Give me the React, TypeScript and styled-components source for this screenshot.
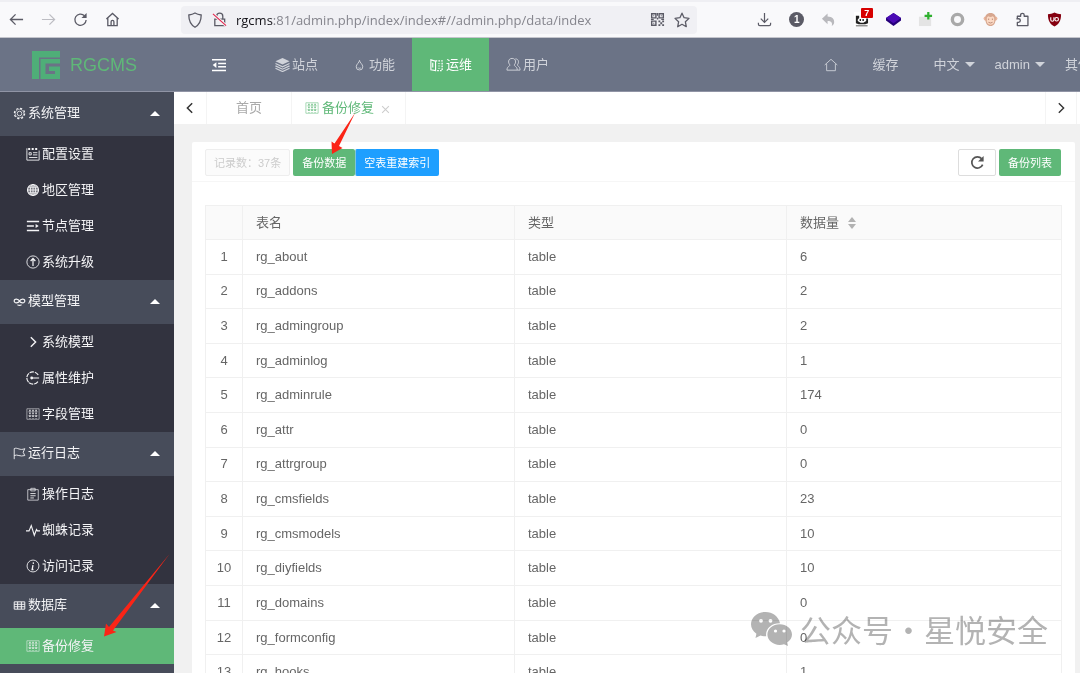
import React from 'react';
import styled, { createGlobalStyle, css } from 'styled-components';

const sans = `"Liberation Sans", "Noto Sans CJK SC", sans-serif`;
const green = '#5fb878';
const blue = '#1e9fff';

const GlobalStyle = createGlobalStyle`
  * { box-sizing: border-box; }
  body { margin: 0; background: #f1f1f1; color: #666; font: 13px/20px ${sans}; }
  button, input { font: inherit; color: inherit; border: 0; padding: 0; margin: 0; background: none; }
  button { cursor: pointer; }
  a { color: inherit; text-decoration: none; }
  svg { display: block; flex: none; }
`;

/* ---------- icons ---------- */

type IconProps = { size?: number; weight?: number; children: React.ReactNode };

const Icon = ({ size = 14, weight = 1, children }: IconProps) => (
  <svg width={size} height={size} viewBox="0 0 16 16" fill="none" stroke="currentColor" strokeWidth={weight} aria-hidden="true">
    {children}
  </svg>
);

const fill = { fill: 'currentColor', stroke: 'none' };

const icons = {
  gear: (
    <>
      <circle cx="8" cy="8" r="2.800" />
      <circle cx="8" cy="8" r="6.300" strokeWidth="1.500" strokeDasharray="2.600 2.350" />
      <circle cx="8" cy="8" r="5.200" strokeOpacity=".7" />
    </>
  ),
  config: (
    <>
      <path d="M1 4v11h14V4M1 4V1.500" />
      <path d="M2.500 3.500V1h2.300v2.500zM6.500 3.500V1h2.300v2.500zM10.500 3.500V1h2.300v2.500z" {...fill} />
      <path d="M3.500 6.500h2.500v2.500H3.500zM8 6.500h5M8 9h5M3.500 12h9.500" />
    </>
  ),
  globe: (
    <>
      <circle cx="8" cy="8" r="6.300" strokeWidth="1.300" fill="currentColor" fillOpacity=".35" />
      <ellipse cx="8" cy="8" rx="3" ry="6.300" />
      <path d="M8 1.500v13M2 8h12M3 4.800h10M3 11.200h10" />
    </>
  ),
  nodes: (
    <>
      <path d="M1 2.800h14M1 8h8M1 13.200h14" strokeWidth="1.700" />
      <path d="M11 5.800 14.500 8 11 10.200z" {...fill} />
    </>
  ),
  upgrade: (
    <>
      <circle cx="8" cy="8" r="7" />
      <path d="M8 12.500V4.500M5.300 6.800 8 4l2.700 2.800" strokeWidth="1.400" />
    </>
  ),
  model: (
    <>
      <path d="M8 7.500C6.500 4.500 1.500 4 1.500 7.300s5 2.700 6.500.2c1.500-3 6.500-3.500 6.500-.2s-5 2.700-6.500.2z" strokeWidth="1.500" />
      <path d="M5.500 12q2.500 1.500 5 0" strokeWidth="1.400" />
    </>
  ),
  chevron: <path d="m5.500 2.500 5.500 5.500-5.500 5.500" strokeWidth="1.600" />,
  attr: (
    <>
      <path d="M14 4.500A7 7 0 1 0 14 11.500" strokeWidth="1.300" strokeDasharray="5 1" />
      <path d="M6 8h9" strokeWidth="1.200" />
      <circle cx="6.500" cy="8" r="1.600" {...fill} />
    </>
  ),
  grid: (
    <>
      <path d="M1 2h14v12H1z" strokeOpacity=".6" />
      <path d="M4.500 3v10M8 3v10M11.500 3v10" strokeWidth="1.500" strokeDasharray="2 1.200" />
      <path d="M2 5.500h12M2 10h12" strokeOpacity=".4" />
    </>
  ),
  flag: <path d="M1.500 15V2c4-2 7 3 13 0l-2 4.500 2 4c-6 2-9-2-13 0" strokeWidth="1.100" />,
  clipboard: (
    <>
      <path d="M2 3h12v12H2zM5.500 1.500h5v3h-5z" strokeOpacity=".8" />
      <path d="M5 7.500h6M5 10h6M5 12.500h4" />
    </>
  ),
  pulse: <path d="M0 9h3.500L6 3l3.500 11L12 7.500l1 1.500h3" strokeWidth="1.300" />,
  info: (
    <>
      <circle cx="8" cy="8" r="6.800" />
      <path d="M8.500 3.800 8.300 5.500M8 7l-1 5h1.500" strokeWidth="1.500" />
    </>
  ),
  database: <path d="M1.500 3.500h13v9h-13zM1.500 6.500h13M1.500 9.500h13M5.700 3.500v9M10.300 3.500v9" strokeWidth="1.200" />,
  layers: (
    <>
      <path d="M8 1 15.500 4.500 8 8 .500 4.500z" {...fill} />
      <path d="M.500 7 8 10.500 15.500 7M.500 9.500 8 13l7.500-3.500M.500 12 8 15.500l7.500-3.500" strokeWidth="1.300" />
    </>
  ),
  flame: <path d="M8 3.500c0 2.500-3.500 4-3.500 7A3.300 3.300 0 0 0 8 13.800a3.300 3.300 0 0 0 3.500-3.300C11.500 7.500 8 6 8 3.500zM6.500 11.300c.3 1 2.700 1 3 0" />,
  book: (
    <>
      <path d="M2 2 7 3.500v10L2 12.500z" strokeWidth="1.200" />
      <path d="M4 5v5" strokeWidth="1.200" />
      <path d="M7 3h7v10.500H7" strokeDasharray="1.800 1.200" strokeWidth="1.400" />
      <path d="M9.500 6h2.500M9.500 8.500h2.500M9.500 11h2.500" strokeOpacity=".7" />
    </>
  ),
  users: (
    <>
      <path d="M6.500 1.500c4.500 0 4.500 5 2.200 7 .3 1.500 3.300 1.500 3.300 5.500H1c0-4 3-4 3.300-5.500C2 6.500 2 1.500 6.500 1.500z" />
      <path d="M10 2c4 0 4 4.500 2 6.500.5 1.500 3 1.500 3 5.500h-3" />
    </>
  ),
  house: <path d="M.8 8 8 1.500 15.200 8M3 6.500V14.500h10V6.500" />,
  shrink: (
    <>
      <path d="M0 2h16M7 6.300h9M7 10h9M0 14.300h16" strokeWidth="1.900" />
      <path d="M5 4.800v6.500L.8 8z" {...fill} />
    </>
  ),
  left: <path d="M10.500 2.500 5 8l5.500 5.500" strokeWidth="1.700" />,
  close: <path d="m2 2 12 12M14 2 2 14" strokeWidth="1.800" />,
  refresh: (
    <>
      <path d="M13.500 10.200A6 6 0 1 1 12.500 4" strokeWidth="1.800" />
      <path d="M14.500 1v6H8.500z" {...fill} />
    </>
  ),
  back: <path d="M15 8H1.500M7 2.500 1.500 8 7 13.500" strokeWidth="1.400" />,
  forward: <path d="M1 8h13.500M9 2.500 14.500 8 9 13.500" strokeWidth="1.300" />,
  reload: (
    <>
      <path d="M14 8.500A6 6 0 1 1 12.300 4" strokeWidth="1.400" />
      <path d="M14.500 1v5.500H9z" {...fill} />
    </>
  ),
  home: <path d="M1.500 7.500 8 1.500l6.500 6M3 6.500v8h10v-8M6.500 14.500v-4q0-1.500 1.500-1.500t1.500 1.500v4" strokeWidth="1.400" />,
  shield: <path d="M8 1c2 1.200 4 1.700 6.200 2C14.200 9 12 13 8 15.200 4 13 1.800 9 1.800 3 4 2.700 6 2.200 8 1z" strokeWidth="1.300" />,
  lock: (
    <>
      <path d="M3 7.500h10.500v7H3zM5 7.500V4.500a3.200 3.200 0 0 1 6.500 0v3" strokeWidth="1.400" />
      <path d="m1 2 14 12.500" stroke="#f5f5f7" strokeWidth="3" />
      <path d="m1 2 14 12.500" stroke="#e22850" strokeWidth="1.300" />
    </>
  ),
  qr: (
    <>
      <path d="M1.800 1.800h4.500v4.500H1.800zM9.700 1.800h4.500v4.500H9.700zM1.800 9.700h4.500v4.500H1.800z" strokeWidth="1.500" />
      <path d="M3.500 3.500h1v1h-1zM11.500 3.500h1v1h-1zM3.500 11.500h1v1h-1zM9 9h2v2H9zM11 11h2v2h-2zM13 9h2v2h-2zM9 13h2v2H9zM13 13h2v2h-2zM7.300 1h1.200v3H7.300zM7.300 6h1.500v2H7.300zM1 7.300h3v1.200H1zM12 7.300h3v1.200h-3z" {...fill} />
    </>
  ),
  star: <path d="m8 1.200 2.100 4.500 4.900.7-3.600 3.400.9 4.900L8 12.300l-4.300 2.400.9-4.900L1 6.400l4.900-.7z" strokeWidth="1.300" strokeLinejoin="round" />,
  download: <path d="M8 1v9.500M4 7l4 4 4-4M1.500 11.500v1.500q0 1.500 1.500 1.500h10q1.500 0 1.500-1.500v-1.500" strokeWidth="1.300" />,
  undo: <path d="M7 1.500v3.300c5 0 7.500 3 7 6.700-.2 1.500-1 2.500-2.500 3.500 1-3.500-.5-5.300-4.500-5.300V13L1 7.200z" {...fill} />,
  cube: (
    <>
      <path d="M8 1 16 6.500V9l-8 6L0 9V6.500z" fill="#26007a" stroke="none" />
      <path d="M8 1 16 6.500 8 12 0 6.500z" fill="#4b0bb5" stroke="none" />
    </>
  ),
  plus: (
    <>
      <path d="M1 5h13v10H1z" fill="#e4e4e4" stroke="none" />
      <path d="M11 0v8M7 4h8" stroke="#2fb02f" strokeWidth="2.400" />
    </>
  ),
  ring: <circle cx="8" cy="8" r="5.500" stroke="#a9a9a9" strokeWidth="3.600" />,
  monkey: (
    <>
      <circle cx="2.800" cy="7" r="2.200" fill="#ecb79d" stroke="none" />
      <circle cx="13.200" cy="7" r="2.200" fill="#ecb79d" stroke="none" />
      <path d="M8 1c4 0 6 2.500 5.500 6.500C13.300 12.500 11.500 15 8 15s-5.300-2.500-5.500-7.500C2 3.500 4 1 8 1z" fill="#d7a78f" stroke="none" />
      <path d="M5.500 4.500Q8 6 10.500 4.500q2 1 1.500 3.500.5 5-4 5.500-4.500-.5-4-5.500-.5-2.500 1.500-3.500z" fill="#fbd9c4" stroke="none" />
      <path d="M6 7v1.500M10 7v1.500M5.800 11q2.200 1.500 4.400 0" stroke="#b98a76" />
    </>
  ),
  puzzle: <path d="M2.500 6.500v-2H6V3.300a1.900 1.900 0 0 1 3.800 0v1.200h4v10H2.500V11h1.300a1.900 1.900 0 0 0 0-3.800H1.500" strokeWidth="1.400" strokeLinejoin="round" />,
  guard: (
    <>
      <path d="M8 .5c2.500 1.200 4.500 1.700 7 1.800 0 6.500-2 10.500-7 13.200C3 12.800 1 8.800 1 2.300 3.500 2.200 5.500 1.700 8 .5z" fill="#850010" stroke="none" />
      <path d="M4 5.500v2.700q0 1.600 1.700 1.600t1.700-1.600V5.500" stroke="#fff" strokeWidth="1.200" />
      <circle cx="10.300" cy="7.700" r="1.900" stroke="#fff" strokeWidth="1.200" />
    </>
  ),
  panda: (
    <>
      <path d="M0 0h16v16H0z" fill="#fff" stroke="none" />
      <path d="M2 4h3.500v2.500L4 8v1.500l3 2h3l3-2V7h2v5l-3 1H5l-3-1zM6 7.500h1.500v2H6zM9 7.500h1.500v2H9z" {...fill} />
      <path d="M2 14.700h12.500" strokeOpacity=".6" strokeWidth="1.300" />
    </>
  ),
};

type IconName = keyof typeof icons;
const Glyph = ({ name, size }: { name: IconName; size?: number }) => <Icon size={size}>{icons[name]}</Icon>;

/* ---------- browser toolbar ---------- */

const BrowserBar = styled.div`
  flex: none;
  display: flex;
  align-items: center;
  height: 38px;
  padding: 0 18px 0 9px;
  background: #f9f9fb;
  border-top: 2px solid #efeff3;
  border-bottom: 1px solid #c4c5cc;
  color: #5b5b66;
`;

const BrowserNav = styled.div`
  display: flex;
  gap: 17px;
  width: 172px;
`;

const IconButton = styled.button<{ $tone?: string }>`
  position: relative;
  display: flex;
  color: ${(p) => p.$tone ?? 'inherit'};
`;

const AddressBar = styled.div`
  flex: 1;
  display: flex;
  align-items: center;
  gap: 9px;
  height: 28px;
  padding: 0 7px 0 6px;
  background: #f0f0f4;
  border-radius: 4px;
`;

const Address = styled.label`
  flex: 1;
  display: flex;
  font-family: "Open Sans", "Noto Sans", sans-serif;
  color: #85858d;
  b { font-weight: 400; color: #15141a; }
  input { flex: 1; min-width: 0; outline: 0; }
`;

const Extensions = styled.div`
  display: flex;
  justify-content: space-between;
  width: 305px;
  margin-left: 60px;
`;

const Badge = styled.span`
  position: absolute;
  top: -4px;
  right: -4px;
  width: 12px;
  background: #d70000;
  border-radius: 1px;
  color: #fff;
  font: bold 9px/10px ${sans};
  text-align: center;
`;

const Counter = styled.span`
  width: 15px;
  border-radius: 50%;
  background: #5b5b66;
  color: #fff;
  font: bold 10px/15px ${sans};
  text-align: center;
`;

/* ---------- application header ---------- */

const Page = styled.div`
  display: flex;
  flex-direction: column;
  height: 100vh;
  overflow: hidden;
`;

const Header = styled.header`
  flex: none;
  display: flex;
  align-items: stretch;
  height: 54px;
  overflow: hidden;
  background: #6b7386;
  border-bottom: 1px solid #9094a5;
  color: #d0d3da;
`;

const Logo = styled.a`
  display: flex;
  align-items: center;
  gap: 10px;
  width: 174px;
  padding-left: 32px;
  color: ${green};
  font-size: 18px;
`;

const MenuToggle = styled.button`
  width: 84px;
  padding-left: 38px;
  color: #fff;
`;

const TopNav = styled.nav`
  display: flex;
`;

const TopLink = styled.a<{ $active?: boolean }>`
  display: flex;
  align-items: center;
  gap: 2px;
  padding: 0 17px;
  ${(p) => p.$active && css`
    background: ${green};
    color: #fff;
    margin-bottom: -1px;
  `}
`;

const UserNav = styled.nav`
  display: flex;
  align-items: center;
  gap: 20px;
  margin: 0 -11px 0 auto;
  white-space: nowrap;
`;

const WideLink = styled.a`
  margin-right: 15px;
`;

const DropButton = styled.button`
  display: flex;
  align-items: center;
  gap: 5px;
`;

const Caret = styled.span<{ $up?: boolean }>`
  border: 5px solid transparent;
  ${(p) => p.$up
    ? css`border-top-width: 0; border-bottom-color: #fff;`
    : css`border-bottom-width: 0; border-top-color: currentColor;`}
`;

/* ---------- sidebar ---------- */

const Body = styled.div`
  flex: 1;
  display: flex;
  min-height: 0;
`;

const Sidebar = styled.aside`
  flex: none;
  width: 174px;
  overflow: hidden;
  background: #474c5a;
  color: #f4f4f6;
`;

const GroupHead = styled.button`
  display: flex;
  align-items: center;
  gap: 2px;
  width: 100%;
  height: 44px;
  padding: 0 14px 2px 13px;
  ${Caret} { margin-left: auto; }
`;

const GroupList = styled.div`
  background: #32333f;
`;

const SideLink = styled.a<{ $active?: boolean }>`
  display: flex;
  align-items: center;
  gap: 2px;
  height: 36px;
  padding-left: 26px;
  background: ${(p) => (p.$active ? green : 'transparent')};
`;

/* ---------- content ---------- */

const Main = styled.main`
  flex: 1;
  min-width: 0;
`;

const TabBar = styled.div`
  display: flex;
  height: 32px;
  padding-right: 3px;
  background: #fff;
`;

const TabArrow = styled.button<{ $end?: boolean }>`
  display: grid;
  place-items: center;
  width: ${(p) => (p.$end ? 32 : 33)}px;
  margin-left: ${(p) => (p.$end ? 'auto' : 0)};
  border: solid #f4f4f4;
  border-width: ${(p) => (p.$end ? '0 1px' : '0 1px 0 0')};
  color: #333;
`;

const Tab = styled.div<{ $active?: boolean }>`
  display: flex;
  align-items: center;
  gap: 3px;
  padding: 0 ${(p) => (p.$active ? 15 : 29)}px 0 ${(p) => (p.$active ? 13 : 29)}px;
  border-right: 1px solid #f4f4f4;
  color: ${(p) => (p.$active ? green : '#aaa')};
  ${IconButton} { margin: 3px 0 0 4px; }
`;

const Card = styled.section`
  margin: 18px 5px 0 18px;
  background: #fff;
  border-radius: 2px;
`;

const CardHead = styled.div`
  display: flex;
  align-items: center;
  height: 40px;
  padding: 2px 14px 0 13px;
  border-bottom: 1px solid #f6f6f6;
`;

const Button = styled.button<{ $kind: 'primary' | 'info' | 'plain' | 'muted' }>`
  display: flex;
  align-items: center;
  justify-content: center;
  height: 27px;
  padding: 0 8px;
  border: 1px solid transparent;
  border-radius: 2px;
  font-size: 11px;
  white-space: nowrap;
  ${(p) => ({
    primary: css`background: ${green}; color: #fff;`,
    info: css`background: ${blue}; color: #fff;`,
    plain: css`width: 38px; background: #fff; border-color: #ddd; color: #555;`,
    muted: css`background: #fbfbfb; border-color: #eee; color: #ccc;`,
  })[p.$kind]}
`;

const ButtonGroup = styled.div<{ $end?: boolean }>`
  display: flex;
  gap: ${(p) => (p.$end ? 3 : 0)}px;
  margin-left: ${(p) => (p.$end ? 'auto' : '3px')};
  button + button { border-left-color: ${(p) => (p.$end ? 'transparent' : '#7fc5d8')}; }
`;

const TableWrap = styled.div`
  padding: 23px 13px 13px;
`;

const Table = styled.table`
  width: 100%;
  height: 485px;
  table-layout: fixed;
  border-collapse: collapse;
  th, td {
    padding: 0 13px;
    border: 1px solid #f0f0f0;
    font-weight: 400;
    text-align: left;
  }
  th { height: 34px; background: #fafafa; }
  th:first-child, td:first-child { width: 37px; padding: 0; text-align: center; }
  th:nth-child(2), th:nth-child(3) { width: 272px; }
`;

const SortButton = styled.button`
  display: flex;
  align-items: center;
  gap: 9px;
`;

const SortMarks = styled.span`
  display: grid;
  gap: 2px;
  ${Caret} { border-width: 0 4px 5px; border-bottom-color: #b2b2b2; }
  ${Caret} + ${Caret} { border-width: 5px 4px 0; border-top-color: #b2b2b2; }
`;

/* ---------- overlays ---------- */

const Arrows = styled.svg`
  position: absolute;
  top: 0;
  left: 0;
  pointer-events: none;
`;

const Watermark = styled.div`
  position: absolute;
  right: 32px;
  bottom: 22px;
  display: flex;
  align-items: center;
  gap: 8px;
  color: #b3b3b3;
  font: 31px/44px "Noto Sans CJK SC", sans-serif;
  mix-blend-mode: multiply;
  pointer-events: none;
`;

/* ---------- data ---------- */

const groups: { icon: IconName; title: string; items: [IconName, string][] }[] = [
  { icon: 'gear', title: '系统管理', items: [['config', '配置设置'], ['globe', '地区管理'], ['nodes', '节点管理'], ['upgrade', '系统升级']] },
  { icon: 'model', title: '模型管理', items: [['chevron', '系统模型'], ['attr', '属性维护'], ['grid', '字段管理']] },
  { icon: 'flag', title: '运行日志', items: [['clipboard', '操作日志'], ['pulse', '蜘蛛记录'], ['info', '访问记录']] },
  { icon: 'database', title: '数据库', items: [['grid', '备份修复']] },
];

const topLinks: [IconName, string][] = [['layers', '站点'], ['flame', '功能'], ['book', '运维'], ['users', '用户']];

const rows: [string, number][] = [
  ['rg_about', 6], ['rg_addons', 2], ['rg_admingroup', 2], ['rg_adminlog', 1], ['rg_adminrule', 174],
  ['rg_attr', 0], ['rg_attrgroup', 0], ['rg_cmsfields', 23], ['rg_cmsmodels', 10], ['rg_diyfields', 10],
  ['rg_domains', 0], ['rg_formconfig', 0], ['rg_hooks', 1],
];

export default function App() {
  return (
    <Page>
      <GlobalStyle />
      <BrowserBar>
        <BrowserNav>
          <IconButton aria-label="后退"><Glyph name="back" size={15} /></IconButton>
          <IconButton aria-label="前进" $tone="#bdbdc3"><Glyph name="forward" size={15} /></IconButton>
          <IconButton aria-label="刷新"><Glyph name="reload" size={15} /></IconButton>
          <IconButton aria-label="主页"><Glyph name="home" size={15} /></IconButton>
        </BrowserNav>
        <AddressBar>
          <Glyph name="shield" size={16} />
          <Glyph name="lock" size={15} />
          <Address>
            <b>rgcms</b>
            <input aria-label="地址" defaultValue=":81/admin.php/index/index#//admin.php/data/index" />
          </Address>
          <IconButton aria-label="二维码"><Glyph name="qr" size={15} /></IconButton>
          <IconButton aria-label="收藏"><Glyph name="star" size={16} /></IconButton>
        </AddressBar>
        <Extensions>
          <IconButton aria-label="下载"><Glyph name="download" size={15} /></IconButton>
          <IconButton aria-label="标签"><Counter>1</Counter></IconButton>
          <IconButton aria-label="撤销" $tone="#b9b9bd"><Glyph name="undo" size={15} /></IconButton>
          <IconButton aria-label="通知" $tone="#222"><Glyph name="panda" size={15} /><Badge>7</Badge></IconButton>
          <IconButton aria-label="盒子"><Glyph name="cube" size={15} /></IconButton>
          <IconButton aria-label="添加"><Glyph name="plus" size={15} /></IconButton>
          <IconButton aria-label="圆环"><Glyph name="ring" size={15} /></IconButton>
          <IconButton aria-label="脚本"><Glyph name="monkey" size={15} /></IconButton>
          <IconButton aria-label="扩展"><Glyph name="puzzle" size={15} /></IconButton>
          <IconButton aria-label="拦截"><Glyph name="guard" size={15} /></IconButton>
        </Extensions>
      </BrowserBar>

      <Header>
        <Logo href="#">
          <svg width="28" height="28" viewBox="0 0 28 28" aria-hidden="true">
            <path fill="#4fae78" d="M0 0h28v6.500H7V28H0zM8.500 8H28v4.500H13.500V23H23v-3h-6v-4.500h11V28H8.500z" />
          </svg>
          RGCMS
        </Logo>
        <MenuToggle aria-label="收起菜单"><Glyph name="shrink" /></MenuToggle>
        <TopNav>
          {topLinks.map(([icon, text]) => (
            <TopLink key={text} href="#" $active={text === '运维'}>
              <Glyph name={icon} size={15} />
              {text}
            </TopLink>
          ))}
        </TopNav>
        <UserNav>
          <WideLink href="#" aria-label="首页"><Glyph name="house" /></WideLink>
          <WideLink href="#">缓存</WideLink>
          <DropButton>中文<Caret /></DropButton>
          <DropButton>admin<Caret /></DropButton>
          <a href="#">其他</a>
        </UserNav>
      </Header>

      <Body>
        <Sidebar>
          {groups.map((group) => (
            <div key={group.title}>
              <GroupHead>
                <Glyph name={group.icon} size={13} />
                {group.title}
                <Caret $up />
              </GroupHead>
              <GroupList>
                {group.items.map(([icon, text]) => (
                  <SideLink key={text} href="#" $active={text === '备份修复'}>
                    <Glyph name={icon} />
                    {text}
                  </SideLink>
                ))}
              </GroupList>
            </div>
          ))}
        </Sidebar>

        <Main>
          <TabBar>
            <TabArrow aria-label="向左"><Glyph name="left" /></TabArrow>
            <Tab><a href="#">首页</a></Tab>
            <Tab $active>
              <Glyph name="grid" />
              <a href="#">备份修复</a>
              <IconButton aria-label="关闭" $tone="#ccc"><Glyph name="close" size={9} /></IconButton>
            </Tab>
            <TabArrow aria-label="向右" $end><Glyph name="chevron" /></TabArrow>
          </TabBar>

          <Card>
            <CardHead>
              <Button $kind="muted" disabled>记录数：37条</Button>
              <ButtonGroup>
                <Button $kind="primary">备份数据</Button>
                <Button $kind="info">空表重建索引</Button>
              </ButtonGroup>
              <ButtonGroup $end>
                <Button $kind="plain" aria-label="刷新"><Glyph name="refresh" size={15} /></Button>
                <Button $kind="primary">备份列表</Button>
              </ButtonGroup>
            </CardHead>
            <TableWrap>
              <Table>
                <thead>
                  <tr>
                    <th />
                    <th>表名</th>
                    <th>类型</th>
                    <th>
                      <SortButton>
                        数据量
                        <SortMarks><Caret $up /><Caret /></SortMarks>
                      </SortButton>
                    </th>
                  </tr>
                </thead>
                <tbody>
                  {rows.map(([name, count], i) => (
                    <tr key={name}>
                      <td>{i + 1}</td>
                      <td>{name}</td>
                      <td>table</td>
                      <td>{count}</td>
                    </tr>
                  ))}
                </tbody>
              </Table>
            </TableWrap>
          </Card>
        </Main>
      </Body>

      <Arrows width="400" height="660" viewBox="0 0 400 660" fill="#fb2416" aria-hidden="true">
        <path d="M355 113 339 146 342.500 148 332 154 331.500 141.500 334.500 143.500z" />
        <path d="M169.500 554 113 630.500 116.500 632 104 636.500 106 623.500 109 627z" />
      </Arrows>

      <Watermark>
        <svg width="41" height="34" viewBox="0 0 41 34" aria-hidden="true">
          <path fill="currentColor" d="M14.500 0C6.500 0 0 5.500 0 12.300c0 3.900 2.100 7.200 5.400 9.500L4.500 26l5-2.500c1.700.5 3.300.8 5.700.8C14 16.500 21 11 29 11.300 27.700 4.500 21.500 0 14.500 0z" />
          <path fill="currentColor" d="M28.700 12.300c-6.800 0-12.300 4.600-12.300 10.300S21.900 33 28.700 33c1.500 0 3-.3 4.300-.7l4 1.700-.8-3.500c3-1.900 4.800-4.700 4.800-7.900 0-5.700-5.500-10.300-12.300-10.300z" />
          <g fill="#fff">
            <circle cx="10" cy="8.800" r="1.900" />
            <circle cx="19.500" cy="8.800" r="1.900" />
            <circle cx="24.500" cy="19" r="1.600" />
            <circle cx="33" cy="19" r="1.600" />
          </g>
        </svg>
        <span>公众号·星悦安全</span>
      </Watermark>
    </Page>
  );
}
